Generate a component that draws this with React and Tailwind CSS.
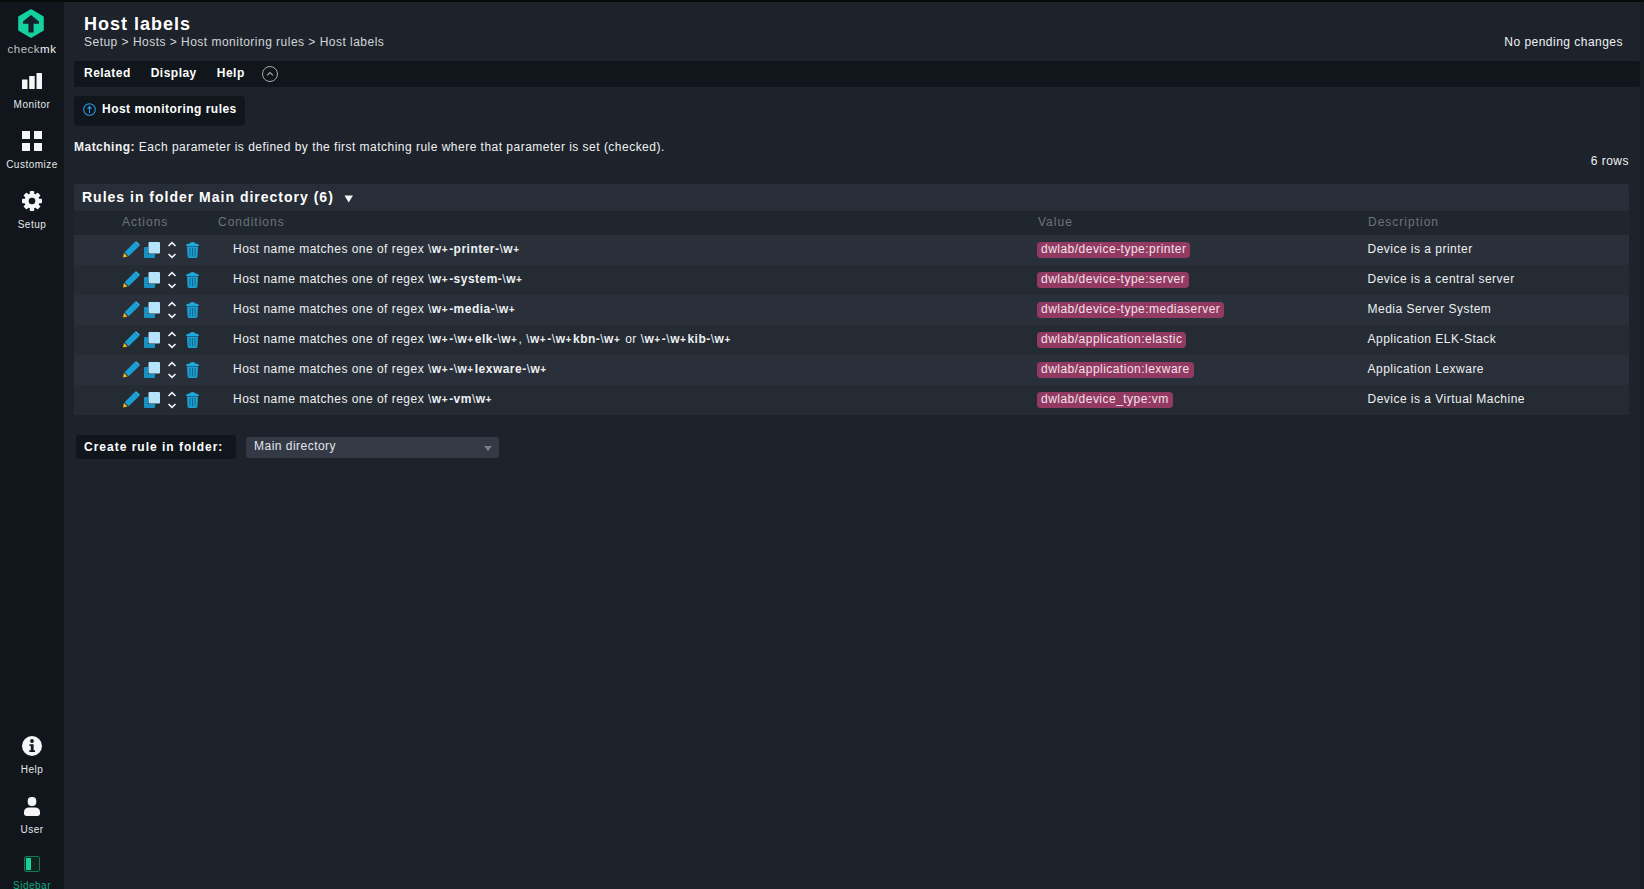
const font = { fontFamily: '"Liberation Sans", Arial, sans-serif' };

function Logo() {
  return (
    <svg width="26" height="29" viewBox="0 0 26 29">
      <path d="M13 1.2 L24.8 8 V21 L13 27.8 L1.2 21 V8 Z" fill="#15d1a0" stroke="#15d1a0" strokeWidth="2" strokeLinejoin="round" />
      <path d="M13 6 L21 12.5 V14.8 H15.6 V23.5 H10.4 V14.8 H5 V12.5 Z" fill="#14202a" />
    </svg>
  );
}
function MonitorIcon() {
  return (
    <svg width="20" height="16" viewBox="0 0 20 16" fill="#f4f6f7">
      <rect x="0" y="6.5" width="5.5" height="9.5" rx="0.5" />
      <rect x="7.2" y="3" width="5.5" height="13" rx="0.5" />
      <rect x="14.5" y="0" width="5.5" height="16" rx="0.5" />
    </svg>
  );
}
function CustomizeIcon() {
  return (
    <svg width="20" height="20" viewBox="0 0 20 20" fill="#f4f6f7">
      <rect x="0" y="0" width="8" height="8" />
      <rect x="12" y="0" width="8" height="8" />
      <rect x="0" y="12" width="8" height="8" />
      <rect x="12" y="12" width="8" height="8" />
    </svg>
  );
}
function GearIcon() {
  return (
    <svg width="20" height="20" viewBox="0 0 20 20">
      <g fill="#f4f6f7">
        <circle cx="10" cy="10" r="7.6" />
        {[0, 45, 90, 135, 180, 225, 270, 315].map((a) => (
          <rect key={a} x="7.8" y="0" width="4.4" height="4.5" rx="0.8" transform={`rotate(${a} 10 10)`} />
        ))}
      </g>
      <circle cx="10" cy="10" r="3.3" fill="#10161c" />
    </svg>
  );
}
function InfoIcon() {
  return (
    <svg width="20" height="20" viewBox="0 0 20 20">
      <circle cx="10" cy="10" r="10" fill="#f4f6f7" />
      <circle cx="10" cy="5" r="1.9" fill="#14191f" />
      <path d="M7.5 8.3 H11.6 V14.2 H13 V16 H7.3 V14.2 H8.8 V10 H7.5 Z" fill="#14191f" />
    </svg>
  );
}
function UserIcon() {
  return (
    <svg width="16" height="19" viewBox="0 0 16 19" fill="#f4f6f7">
      <rect x="3.7" y="0" width="8.6" height="9" rx="4" />
      <path d="M0 15 C0 12 2 10.5 5 10.5 H11 C14 10.5 16 12 16 15 V16.5 C16 18 15 19 13.5 19 H2.5 C1 19 0 18 0 16.5 Z" />
    </svg>
  );
}
function SidebarIcon() {
  return (
    <svg width="16" height="16" viewBox="0 0 16 16">
      <rect x="0.5" y="0.5" width="15" height="15" rx="1.5" fill="#14241f" stroke="#0f7a5c" />
      <rect x="2" y="2" width="5" height="12" fill="#15d1a0" />
    </svg>
  );
}
function ActionIcons() {
  return (
    <div className="flex items-center w-[80px] h-full">
      <svg width="17" height="17" viewBox="0 0 17 17" className="ml-[1px] mt-[-1px]">
        <path d="M0 16.5 L1 12 L4.5 15.5 Z" fill="#f2b81c" />
        <path d="M1.6 11.2 L11.5 1.3 L15.8 5.5 L5.6 15.2 Z" fill="#1a9fd3" />
        <path d="M12.2 0.8 Q13 0 13.8 0.7 L16.3 3 Q17 3.9 16.3 4.8 L15.8 5.3 L11.7 1.2 Z" fill="#2fb4e6" />
      </svg>
      <svg width="16" height="16" viewBox="0 0 16 16" className="ml-[4px] mt-[-1px]">
        <path d="M0 6 Q0 5 1 5 H4 V12 H11 V15 Q11 16 10 16 H1 Q0 16 0 15 Z" fill="#1790c2" />
        <rect x="4.5" y="0" width="11.5" height="11.5" rx="1" fill="#b5e3fb" />
      </svg>
      <svg width="10" height="18" viewBox="0 0 10 18" className="ml-[7px] mt-[-1px]" fill="none" stroke="#f0f2f4" strokeWidth="1.6">
        <path d="M1.5 5 L5 1.6 L8.5 5" />
        <path d="M1.5 13 L5 16.4 L8.5 13" />
      </svg>
      <svg width="13" height="16" viewBox="0 0 13 16" className="ml-[9px] mt-[-1px]">
        <path d="M3.5 1.6 Q4 0 6.5 0 Q9 0 9.5 1.6 Q13 2 13 4 H0 Q0 2 3.5 1.6 Z" fill="#1fa8dd" />
        <path d="M1 4.6 H12 L11.4 14.6 Q11.3 16 10 16 H3 Q1.7 16 1.6 14.6 Z" fill="#1a9fd3" />
        <path d="M4 6 V14.5 M6.5 6 V14.5 M9 6 V14.5" stroke="#14617f" strokeWidth="0.9" />
      </svg>
    </div>
  );
}

function NavItem({ icon, label, iconBox = 'h-[20px]', green, last }) {
  return (
    <div className={`flex flex-col items-center ${last ? '' : 'h-[60px]'}`}>
      <div className={`flex items-center justify-center ${iconBox}`}>{icon}</div>
      <div className={`text-[10px] leading-[12px] mt-[8px] tracking-[0.5px] ${green ? 'text-[#13a97f]' : 'text-[#e4e8ea]'}`}>{label}</div>
    </div>
  );
}

function Rx({ s }) {
  return (
    <>
      {s.split(/(\\|\+)/).map((p, i) => {
        if (p === '\\') return <span key={i}>\</span>;
        if (p === '+') return <b key={i} className="font-bold text-[10px] tracking-[1.65px]">+</b>;
        return <b key={i} className="font-bold">{p}</b>;
      })}
    </>
  );
}

const rows = [
  [<Rx s="\w+-printer-\w+" />, 'dwlab/device-type:printer', 'Device is a printer'],
  [<Rx s="\w+-system-\w+" />, 'dwlab/device-type:server', 'Device is a central server'],
  [<Rx s="\w+-media-\w+" />, 'dwlab/device-type:mediaserver', 'Media Server System'],
  [<><Rx s="\w+-\w+elk-\w+" />, <Rx s="\w+-\w+kbn-\w+" /> or <Rx s="\w+-\w+kib-\w+" /></>, 'dwlab/application:elastic', 'Application ELK-Stack'],
  [<Rx s="\w+-\w+lexware-\w+" />, 'dwlab/application:lexware', 'Application Lexware'],
  [<Rx s="\w+-vm\w+" />, 'dwlab/device_type:vm', 'Device is a Virtual Machine'],
];

export default function App() {
  return (
    <div style={font} className="w-[1644px] h-[889px] overflow-hidden flex flex-col bg-[#1e232b] text-[12px] tracking-[0.48px] text-[#eef1f3]">
      <div className="h-[2px] bg-[#08090b] shrink-0" />
      <div className="flex flex-1 min-h-0">
        <aside className="w-[64px] shrink-0 bg-[#10161c] flex flex-col items-center tracking-normal overflow-hidden">
          <div className="mt-[7px] h-[29px] ml-[-2px]"><Logo /></div>
          <div className="text-[11.5px] leading-[14px] mt-[4px] text-[#bfc3c6] tracking-[0.5px]">check<span className="text-[#f0f2f3]">mk</span></div>
          <div className="mt-[15px]"><NavItem icon={<MonitorIcon />} label="Monitor" /></div>
          <NavItem icon={<CustomizeIcon />} label="Customize" />
          <NavItem icon={<GearIcon />} label="Setup" />
          <div className="mt-auto mb-[-3px] flex flex-col items-center">
            <NavItem icon={<InfoIcon />} label="Help" />
            <NavItem icon={<UserIcon />} label="User" />
            <NavItem icon={<SidebarIcon />} label="Sidebar" iconBox="h-[16px]" green last />
          </div>
        </aside>

        <main className="flex-1 min-w-0 pl-[10px] pr-[11px]">
          <div className="flex justify-between items-end h-[59px] pl-[10px] pr-[6px] pb-[12px]">
            <div>
              <h1 className="text-[18px] leading-[20px] font-bold text-white tracking-[1px]">Host labels</h1>
              <div className="text-[12px] leading-[14px] mt-[1px] text-[#d2d6d9]">Setup &gt; Hosts &gt; Host monitoring rules &gt; Host labels</div>
            </div>
            <div className="text-[12px] leading-[14px] text-[#eef1f3]">No pending changes</div>
          </div>

          <div className="h-[26px] bg-[#10161c] rounded-[2px] flex items-center pl-[10px] mr-[-11px] font-bold text-white gap-[20px]">
            <span className="pb-[2px]">Related</span>
            <span className="pb-[2px]">Display</span>
            <span className="pb-[2px]">Help</span>
            <svg width="16" height="16" viewBox="0 0 16 16" fill="none" stroke="#a5aaae" className="ml-[-3px]">
              <circle cx="8" cy="8" r="7.5" />
              <path d="M5 9.3 L8 6.5 L11 9.3" strokeWidth="1.1" />
            </svg>
          </div>

          <div className="mt-[9px] h-[30px] w-[171px] bg-[#10161c] rounded-[4px] flex items-center pl-[9px] pb-[4px] font-bold text-white gap-[6px]">
            <svg width="13" height="13" viewBox="0 0 13 13" fill="none" stroke="#2b9be8" className="mt-[1px]">
              <circle cx="6.5" cy="6.5" r="5.8" strokeWidth="1.1" />
              <path d="M6.5 10 V4 M4.5 5.8 L6.5 3.6 L8.5 5.8" strokeWidth="1.1" />
            </svg>
            <span>Host monitoring rules</span>
          </div>

          <div className="mt-[14px] leading-[14px]"><b>Matching:</b> Each parameter is defined by the first matching rule where that parameter is set (checked).</div>
          <div className="text-right leading-[14px]">6 rows</div>

          <section className="mt-[16px]">
            <div className="h-[27px] bg-[#272e37] rounded-t-[3px] flex items-center pl-[8px] text-[14px] font-bold text-white tracking-[1px]">
              Rules in folder Main directory (6)
              <svg width="10" height="8" viewBox="0 0 10 8" className="ml-[10px] mt-[2px]"><path d="M0.5 0.5 H9 L4.7 7.5 Z" fill="#f2f4f5" /></svg>
            </div>
            <div className="h-[24px] bg-[#20262e] flex items-center text-[#6c737a] tracking-[1px] pb-[2px]">
              <div className="w-[48px]" />
              <div className="w-[96px]">Actions</div>
              <div className="w-[820px]">Conditions</div>
              <div className="w-[330px]">Value</div>
              <div>Description</div>
            </div>
            {rows.map(([cond, label, desc], i) => (
              <div key={i} className={`h-[30px] flex items-center ${i % 2 === 0 ? 'bg-[#2a3039]' : 'bg-[#252b33]'}`}>
                <div className="w-[48px]" />
                <div className="w-[111px] h-full"><ActionIcons /></div>
                <div className="w-[804px] pb-[2px]">Host name matches one of regex {cond}</div>
                <div className="w-[330px] flex items-center">
                  <span className="block h-[16px] leading-[14px] px-[4px] rounded-[4px] bg-[#923a62] text-[#f2e3ea]">{label}</span>
                </div>
                <div className="pb-[2px] ml-[0.5px]">{desc}</div>
              </div>
            ))}
          </section>

          <div className="mt-[20px] flex items-center ml-[2px]">
            <div className="h-[24px] w-[160px] bg-[#10161c] rounded-[3px] flex items-center pl-[8px] font-bold text-white tracking-[1px]">Create rule in folder:</div>
            <div className="ml-[10px] h-[21px] w-[253px] bg-[#333a46] rounded-[3px] flex items-center justify-between pl-[8px] pr-[7px] text-[#e2e6ea]">
              <span className="pb-[3px]">Main directory</span>
              <svg width="8" height="5" viewBox="0 0 8 5" className="mt-[3px]"><path d="M0 0 H8 L4 5 Z" fill="#7a8088" /></svg>
            </div>
          </div>
        </main>
        <div className="w-[4px] shrink-0 bg-[#181d23]" />
      </div>
    </div>
  );
}
